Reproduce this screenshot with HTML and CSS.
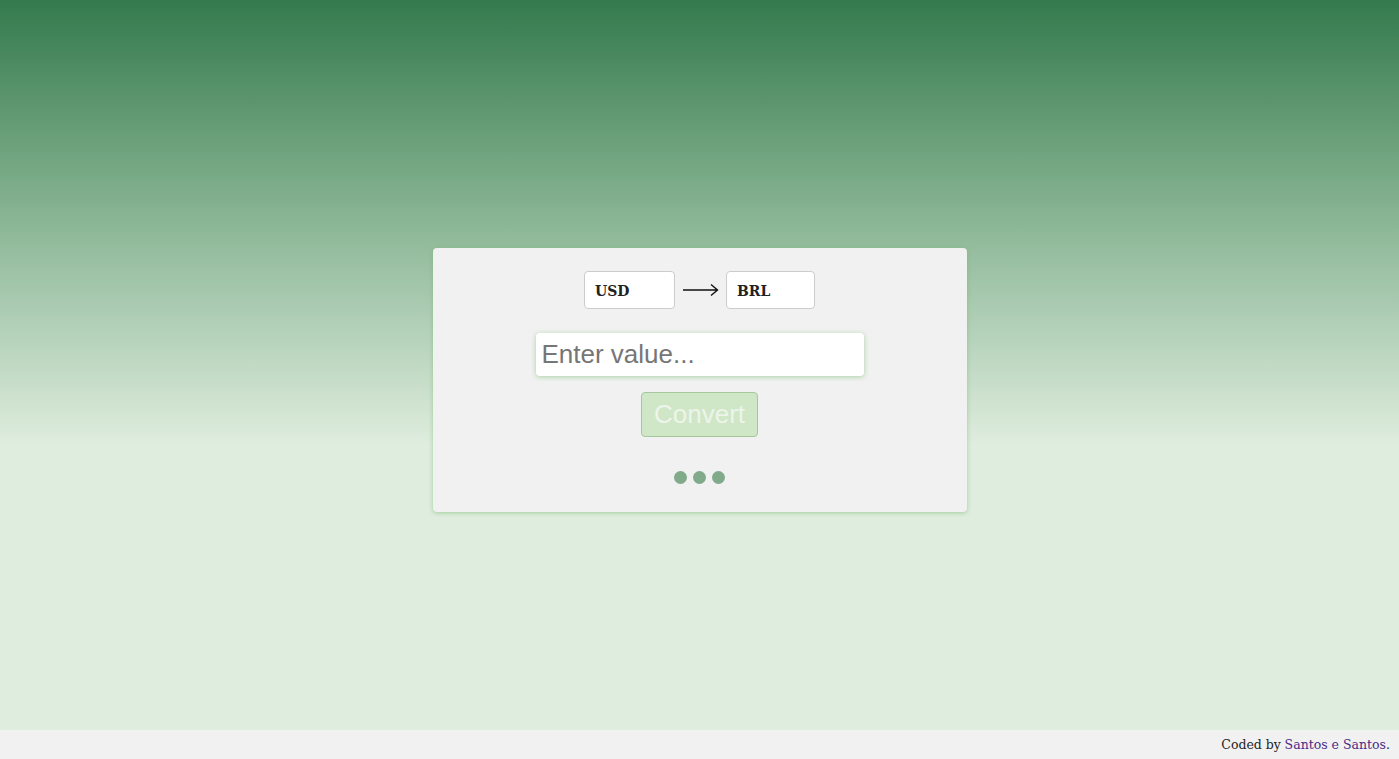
FILE: index.html
```html
<!DOCTYPE html>
<html lang="en">
<head>
<meta charset="utf-8">
<title>Currency Converter</title>
<link rel="stylesheet" href="styles.css">
</head>
<body>
<main class="main">
  <section class="card">
    <div class="pair">
      <div class="currency">USD</div>
      <svg class="arrow" width="36" height="14" viewBox="0 0 36 14"><path d="M0 7H34M28 1.5L34.5 7L28 12.5" fill="none" stroke="#111" stroke-width="1.4"/></svg>
      <div class="currency currency-to">BRL</div>
    </div>
    <input class="value" type="text" placeholder="Enter value...">
    <button class="convert" type="button" disabled>Convert</button>
    <div class="dots"><span class="dot"></span><span class="dot"></span><span class="dot"></span></div>
  </section>
</main>
<footer class="footer">Coded by <a class="link" href="#">Santos e Santos</a>.</footer>
</body>
</html>
```
FILE: styles.css
```css
html, body { margin: 0; padding: 0; }
body {
  height: 759px;
  display: flex;
  flex-direction: column;
  font-family: "DejaVu Serif", serif;
}
.main {
  flex: 1;
  display: flex;
  align-items: center;
  justify-content: center;
  padding-top: 29px;
  background: linear-gradient(to bottom, #347a4d 0%, #8fb999 32%, #dfedde 61%, #dfedde 100%);
}
.card {
  width: 534px;
  box-sizing: border-box;
  background: #f1f1f1;
  border-radius: 4px;
  box-shadow: 0 1px 4px rgba(110, 180, 100, 0.55);
  padding: 23px 0 28px;
  display: flex;
  flex-direction: column;
  align-items: center;
}
.pair {
  display: flex;
  align-items: center;
}
.arrow { margin: 0 7px 0 8px; }
.currency {
  width: 91px;
  height: 38px;
  box-sizing: border-box;
  background: #fff;
  border: 1px solid #cccccc;
  border-radius: 4px;
  padding: 3px 0 0 10px;
  display: flex;
  align-items: center;
  font-weight: bold;
  font-size: 14px;
  color: #222;
}
.currency-to { width: 89px; }
.value {
  margin-top: 24px;
  width: 328px;
  height: 43px;
  box-sizing: border-box;
  border: none;
  border-radius: 4px;
  background: #fff;
  padding: 0 6px;
  font-family: "Liberation Sans", Arial, sans-serif;
  font-size: 26px;
  color: #333;
  box-shadow: 0 1px 5px rgba(120, 190, 110, 0.6);
  outline: none;
}
.value::placeholder { color: #767676; }
.convert {
  margin-top: 16px;
  width: 117px;
  height: 45px;
  box-sizing: border-box;
  background: #cfe7c7;
  border: 1px solid #a6c79c;
  border-radius: 4px;
  font-family: "Liberation Sans", Arial, sans-serif;
  font-size: 26px;
  color: #edf4ea;
  padding: 0;
}
.dots {
  margin-top: 34px;
  display: flex;
  gap: 6px;
}
.dot {
  width: 13px;
  height: 13px;
  border-radius: 50%;
  background: #80aa8a;
}
.footer {
  height: 29px;
  background: #f1f1f1;
  display: flex;
  align-items: center;
  justify-content: flex-end;
  padding-right: 9px;
  font-size: 12.5px;
  color: #1e1e1e;
}
.link { color: #4a2a86; text-decoration: none; margin-left: 0.3em; }
```
